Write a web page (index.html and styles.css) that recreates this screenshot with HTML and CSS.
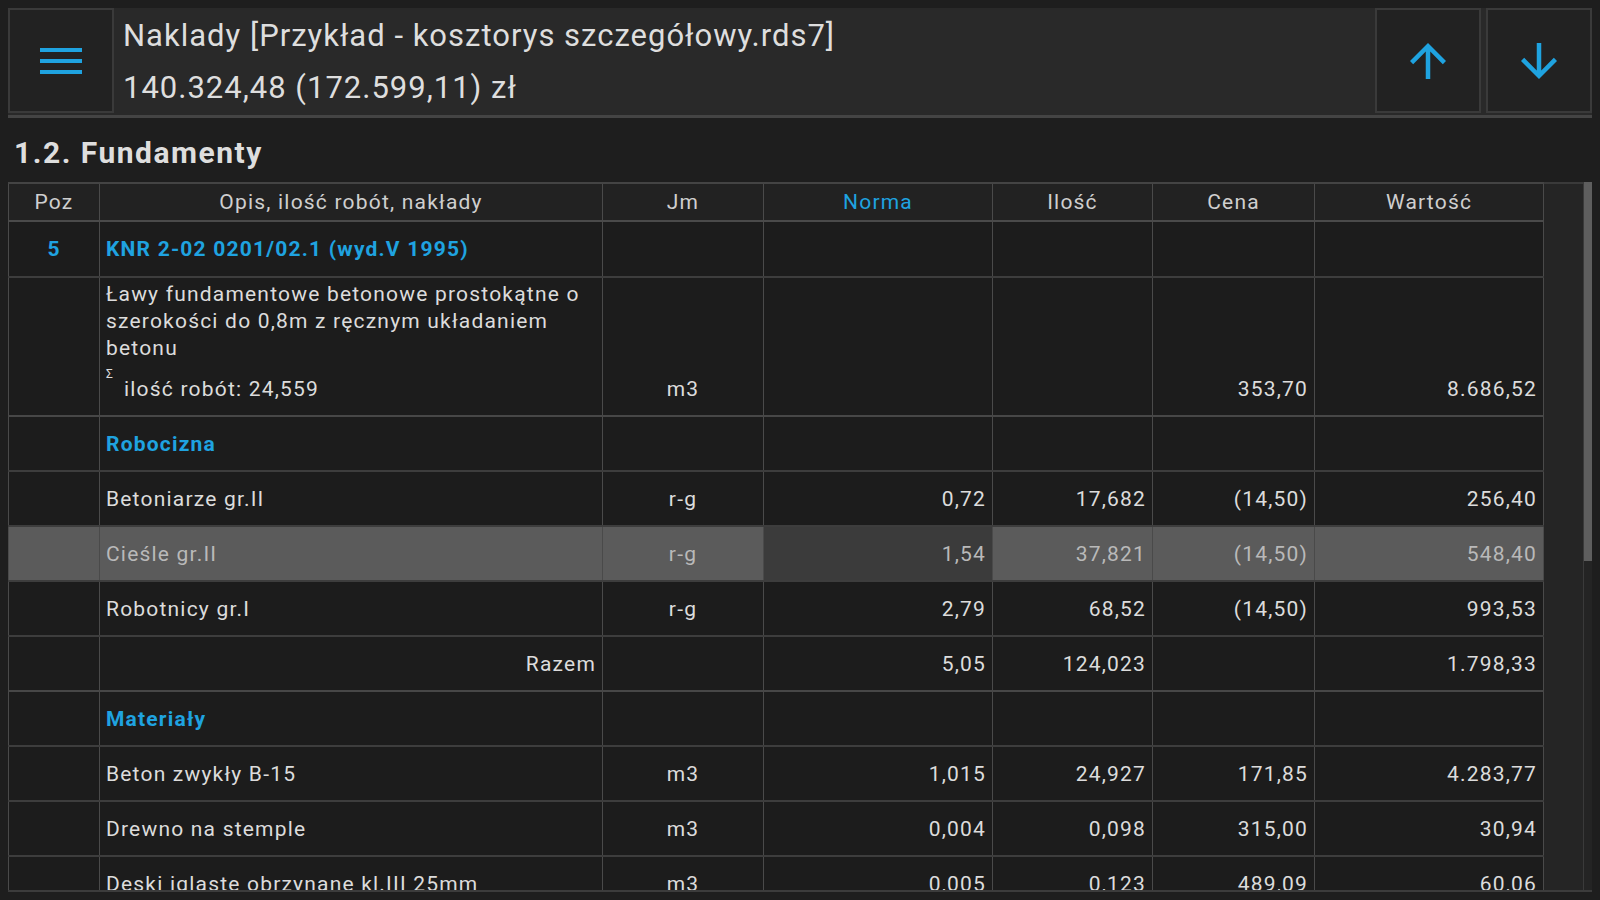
FILE: index.html
```html
<!DOCTYPE html>
<html lang="pl">
<head>
<meta charset="utf-8">
<title>Naklady</title>
<link rel="stylesheet" href="styles.css">
</head>
<body>
<header class="topbar">
  <button class="icon-btn" aria-label="menu">
    <svg width="42" height="30" viewBox="0 0 42 30"><rect x="0" y="2" width="42" height="4" fill="#1fa3e0"/><rect x="0" y="13" width="42" height="4" fill="#1fa3e0"/><rect x="0" y="24" width="42" height="4" fill="#1fa3e0"/></svg>
  </button>
  <div class="title">
    <div>Naklady [Przykład - kosztorys szczegółowy.rds7]</div>
    <div>140.324,48 (172.599,11) zł</div>
  </div>
  <button class="icon-btn" aria-label="w górę">
    <svg width="54" height="54" viewBox="0 0 24 24"><path d="M4 12l1.41 1.41L11 7.83V20h2V7.83l5.58 5.59L20 12l-8-8-8 8z" fill="#1fa3e0"/></svg>
  </button>
  <button class="icon-btn" aria-label="w dół">
    <svg width="54" height="54" viewBox="0 0 24 24"><path d="M20 12l-1.41-1.41L13 16.17V4h-2v12.17l-5.58-5.59L4 12l8 8 8-8z" fill="#1fa3e0"/></svg>
  </button>
</header>

<h1 class="section">1.2. Fundamenty</h1>

<div class="grid-wrap">
  <table class="grid">
    <colgroup>
      <col style="width:91px"><col style="width:503px"><col style="width:161px"><col style="width:229px"><col style="width:160px"><col style="width:162px"><col style="width:229px">
    </colgroup>
    <thead>
      <tr>
        <th>Poz</th><th>Opis, ilość robót, nakłady</th><th>Jm</th><th class="blue">Norma</th><th>Ilość</th><th>Cena</th><th>Wartość</th>
      </tr>
    </thead>
    <tbody>
      <tr class="pos">
        <td class="c blue b">5</td><td class="blue b">KNR 2-02 0201/02.1 (wyd.V 1995)</td><td></td><td></td><td></td><td></td><td></td>
      </tr>
      <tr class="desc">
        <td></td>
        <td>Ławy fundamentowe betonowe prostokątne o<br>szerokości do 0,8m z ręcznym układaniem<br>betonu
          <div class="sum"><span class="sigma">Σ</span>ilość robót: 24,559</div>
        </td>
        <td class="c">m3</td><td></td><td></td><td class="r">353,70</td><td class="r">8.686,52</td>
      </tr>
      <tr class="group">
        <td></td><td class="blue b">Robocizna</td><td></td><td></td><td></td><td></td><td></td>
      </tr>
      <tr>
        <td></td><td>Betoniarze gr.II</td><td class="c">r-g</td><td class="r">0,72</td><td class="r">17,682</td><td class="r">(14,50)</td><td class="r">256,40</td>
      </tr>
      <tr class="sel">
        <td></td><td>Cieśle gr.II</td><td class="c">r-g</td><td class="r cur">1,54</td><td class="r">37,821</td><td class="r">(14,50)</td><td class="r">548,40</td>
      </tr>
      <tr>
        <td></td><td>Robotnicy gr.I</td><td class="c">r-g</td><td class="r">2,79</td><td class="r">68,52</td><td class="r">(14,50)</td><td class="r">993,53</td>
      </tr>
      <tr class="total">
        <td></td><td class="r">Razem</td><td></td><td class="r">5,05</td><td class="r">124,023</td><td></td><td class="r">1.798,33</td>
      </tr>
      <tr class="group">
        <td></td><td class="blue b">Materiały</td><td></td><td></td><td></td><td></td><td></td>
      </tr>
      <tr>
        <td></td><td>Beton zwykły B-15</td><td class="c">m3</td><td class="r">1,015</td><td class="r">24,927</td><td class="r">171,85</td><td class="r">4.283,77</td>
      </tr>
      <tr>
        <td></td><td>Drewno na stemple</td><td class="c">m3</td><td class="r">0,004</td><td class="r">0,098</td><td class="r">315,00</td><td class="r">30,94</td>
      </tr>
      <tr>
        <td></td><td>Deski iglaste obrzynane kl.III 25mm</td><td class="c">m3</td><td class="r">0,005</td><td class="r">0,123</td><td class="r">489,09</td><td class="r">60,06</td>
      </tr>
    </tbody>
  </table>
  <div class="gutter"></div>
  <div class="scroll"><div class="thumb"></div></div>
</div>
</body>
</html>
```
FILE: styles.css
```css
* { box-sizing: border-box; }
html, body { margin: 0; }
body {
  width: 1600px;
  height: 900px;
  overflow: hidden;
  padding: 8px;
  background: #1e1e1e;
  color: #dcdcdc;
  font-family: Roboto, "Liberation Sans", sans-serif;
}
.topbar {
  display: flex;
  gap: 5px;
  height: 110px;
  background: #292929;
  border-bottom: 3px solid #444;
}
.icon-btn {
  width: 106px;
  height: 105px;
  flex: none;
  display: flex;
  align-items: center;
  justify-content: center;
  background: #222;
  border: 2px solid #3a3a3a;
  padding: 0;
  margin: 0;
}
.title {
  flex: 1;
  padding: 2px 0 0 4px;
  font-size: 31px;
  letter-spacing: 1px;
  line-height: 52px;
  color: #dedede;
  white-space: nowrap;
}
.section {
  margin: 0;
  height: 64px;
  padding: 6px 0 0 6px;
  font-size: 30px;
  letter-spacing: 1.5px;
  line-height: 58px;
  font-weight: 700;
  color: #dedede;
}
.grid-wrap {
  display: flex;
  height: 710px;
  overflow: hidden;
  border-bottom: 2px solid #3c3c3c;
}
.grid {
  width: 1535px;
  flex: none;
  table-layout: fixed;
  border-collapse: collapse;
  font-size: 21px;
  letter-spacing: 1.2px;
  align-self: flex-start;
  background: #1c1c1c;
}
.grid th, .grid td {
  border-left: 1px solid #4a4a4a;
  border-right: 1px solid #4a4a4a;
  border-bottom: 2px solid #3d3d3d;
  padding: 0 6px 0 6px;
  white-space: nowrap;
  overflow: hidden;
  vertical-align: middle;
}
.grid th {
  height: 38px;
  font-weight: 400;
  color: #cfcfcf;
  background: #222;
  border-top: 2px solid #444;
  border-bottom: 2px solid #4a4a4a;
  text-align: center;
}
.grid td { height: 55px; color: #dcdcdc; }
.grid tr.pos td { height: 56px; }
.grid tr.desc td {
  height: 138px;
  vertical-align: bottom;
  padding-bottom: 12px;
  line-height: 27px;
  border-bottom: 2px solid #474747;
}
.grid tr.desc td:nth-child(2) { padding-top: 3px; vertical-align: top; white-space: normal; }
.sum { margin-top: 14px; line-height: 27px; }
.sigma {
  display: inline-block;
  width: 18px;
  font-size: 12px;
  line-height: 12px;
  vertical-align: top;
  position: relative;
  top: -8px;
}
.grid tr.total td { border-bottom: 2px solid #474747; }
.c { text-align: center; }
.r { text-align: right; }
.b { font-weight: 700; }
.blue { color: #1fa3e0 !important; }
.grid tr.sel td {
  background: #5b5b5b;
  color: #b9b9b9;
}
.grid tr.sel td.cur { background: #3b3b3b; }
.gutter {
  width: 39px;
  flex: none;
  background: #252525;
  border-top: 2px solid #3a3a3a;
}
.scroll {
  width: 10px;
  flex: none;
  border-left: 1px solid #3a3a3a;
  border-right: 1px solid #333;
  background: #242424;
}
.thumb {
  height: 379px;
  background: #5e5e5e;
}
```
